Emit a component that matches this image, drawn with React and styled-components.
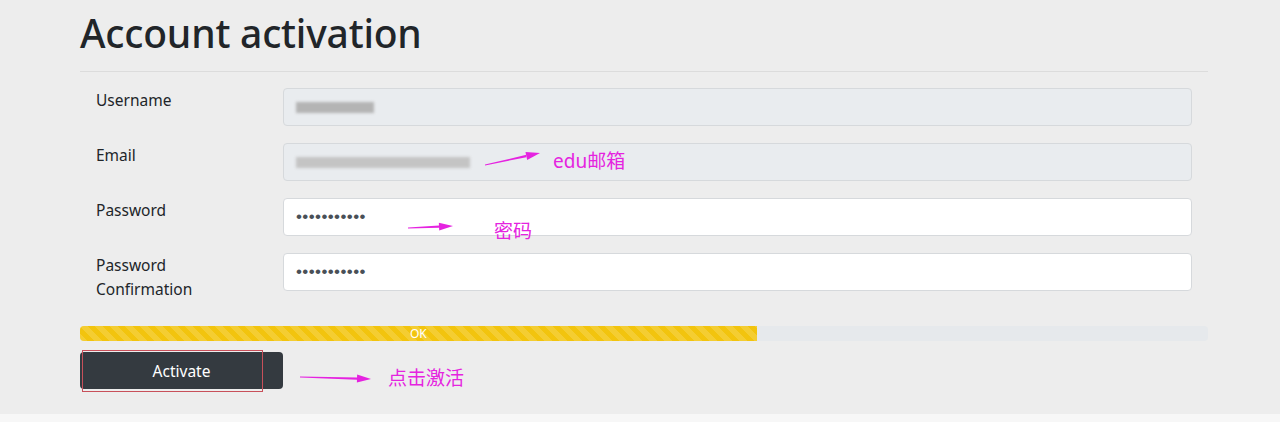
import React from 'react';
import styled, { createGlobalStyle } from 'styled-components';

// page defaults
const GlobalStyle = createGlobalStyle`
  html, body {
    margin: 0;
    padding: 0;
    background: #f7f7f7;
    font-family: "Noto Sans", "Open Sans", "Noto Sans CJK SC", sans-serif;
  }
`;

const Page = styled.div`
  background: #ededed;
  height: 414px;
  position: relative;
  overflow: hidden;
`;

const Container = styled.div`
  width: 1128px;
  margin: 0 auto 0 80px;
`;

const Title = styled.h1`
  margin: 0;
  padding-top: 7px;
  font-size: 39px;
  font-weight: 500;
  line-height: 52px;
  color: #212529;
  letter-spacing: -0.2px;
`;

const Divider = styled.hr`
  border: 0;
  border-top: 1px solid #dcdcdc;
  margin: 12px 0 16px;
`;

const Form = styled.form`
  display: flex;
  flex-direction: column;
  gap: 17px;
  padding: 0 16px;
`;

const Row = styled.div`
  display: flex;
  align-items: flex-start;
`;

const Label = styled.label`
  width: 187px;
  flex-shrink: 0;
  font-size: 15.5px;
  line-height: 24px;
  color: #212529;
`;

const Input = styled.div`
  flex: 1;
  height: 38px;
  box-sizing: border-box;
  border: 1px solid #d6d9dc;
  border-radius: 4px;
  background: ${p => (p.$readonly ? '#e9ecef' : '#fff')};
  display: flex;
  align-items: center;
  padding: 0 12px;
`;

const Blur = styled.span`
  display: inline-block;
  width: ${p => p.$w}px;
  height: 11px;
  background: ${p => p.$c || '#b4b4b4'};
  filter: blur(1.5px);
`;

const Dots = styled.span`
  font-family: "Liberation Sans", sans-serif;
  font-size: 17px;
  letter-spacing: 0.4px;
  color: #495057;
`;

const Progress = styled.div`
  margin-top: 25px;
  height: 15px;
  background: #e6e9ec;
  border-radius: 4px;
  overflow: hidden;
  display: flex;
`;

const Bar = styled.div`
  background-color: #f2c40e;
  background-image: linear-gradient(
    45deg,
    rgba(255, 255, 255, 0.15) 25%,
    transparent 25%,
    transparent 50%,
    rgba(255, 255, 255, 0.15) 50%,
    rgba(255, 255, 255, 0.15) 75%,
    transparent 75%,
    transparent
  );
  background-size: 15px 15px;
  color: #fff;
  font-size: 12px;
  line-height: 15px;
  text-align: center;
`;

const Button = styled.button`
  margin-top: 11px;
  width: 203px;
  height: 37px;
  border: 0;
  border-radius: 4px;
  background: #343a40;
  color: #fff;
  font-family: inherit;
  font-size: 15.5px;
`;

// annotation overlays drawn on top of the screenshot
const Note = styled.span`
  position: absolute;
  left: ${p => p.$x}px;
  top: ${p => p.$y}px;
  color: #e523e0;
  font-size: 19px;
  line-height: 24px;
  font-family: "Noto Sans", "Noto Sans CJK SC", sans-serif;
`;

const Frame = styled.div`
  position: absolute;
  left: 82px;
  top: 350px;
  width: 181px;
  height: 42px;
  box-sizing: border-box;
  border: 1px solid #c8505a;
`;

const ArrowSvg = styled.svg`
  position: absolute;
  left: 0;
  top: 0;
  pointer-events: none;
`;

function Arrow({ x1, y1, x2, y2 }) {
  const ang = Math.atan2(y2 - y1, x2 - x1);
  const len = 14;
  const w = 4;
  const bx = x2 - len * Math.cos(ang);
  const by = y2 - len * Math.sin(ang);
  const px = -Math.sin(ang) * w;
  const py = Math.cos(ang) * w;
  return (
    <g>
      <polygon
        points={`${x1},${y1 - 0.4} ${bx},${by - 1.2} ${bx},${by + 1.2} ${x1},${y1 + 0.4}`}
        fill="#e523e0"
      />
      <polygon points={`${x2},${y2} ${bx + px},${by + py} ${bx - px},${by - py}`} fill="#e523e0" />
    </g>
  );
}

export default function App() {
  return (
    <>
      <GlobalStyle />
      <Page>
        <Container>
          <Title>Account activation</Title>
          <Divider />
          <Form>
            <Row>
              <Label>Username</Label>
              <Input $readonly>
                <Blur $w={78} />
              </Input>
            </Row>
            <Row>
              <Label>Email</Label>
              <Input $readonly>
                <Blur $w={174} $c="#c4c4c4" />
              </Input>
            </Row>
            <Row>
              <Label>Password</Label>
              <Input>
                <Dots>•••••••••••</Dots>
              </Input>
            </Row>
            <Row>
              <Label>
                Password
                <br />
                Confirmation
              </Label>
              <Input>
                <Dots>•••••••••••</Dots>
              </Input>
            </Row>
          </Form>
          <Progress>
            <Bar style={{ width: '60%' }}>OK</Bar>
          </Progress>
          <Button type="button">Activate</Button>
        </Container>
        <Frame />
        <ArrowSvg width="1280" height="414">
          <Arrow x1={485} y1={165} x2={540} y2={153} />
          <Arrow x1={408} y1={228} x2={453} y2={226} />
          <Arrow x1={300} y1={377} x2={371} y2={379} />
        </ArrowSvg>
        <Note $x={553} $y={149}>edu邮箱</Note>
        <Note $x={494} $y={219}>密码</Note>
        <Note $x={388} $y={366}>点击激活</Note>
      </Page>
    </>
  );
}
